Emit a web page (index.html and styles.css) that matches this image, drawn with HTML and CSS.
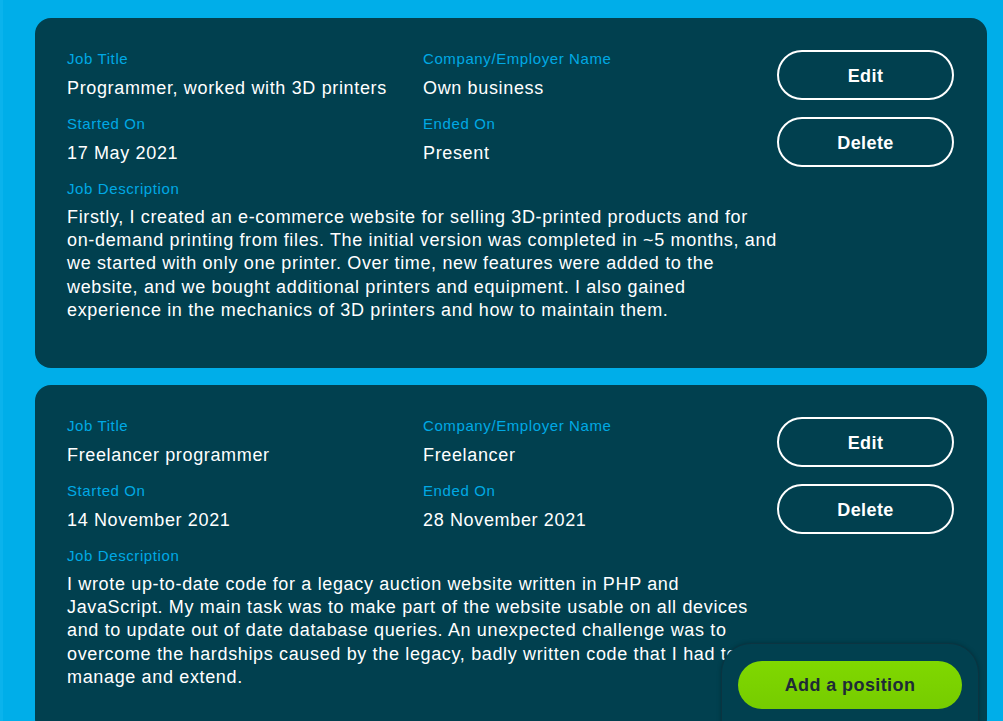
FILE: index.html
```html
<!DOCTYPE html>
<html lang="en">
<head>
<meta charset="utf-8">
<title>Positions</title>
<link rel="stylesheet" href="styles.css">
</head>
<body>
<main class="list">
  <article class="card">
    <div class="info">
      <div class="field">
        <div class="label">Job Title</div>
        <div class="value">Programmer, worked with 3D printers</div>
      </div>
      <div class="field">
        <div class="label">Company/Employer Name</div>
        <div class="value">Own business</div>
      </div>
      <div class="field">
        <div class="label">Started On</div>
        <div class="value">17 May 2021</div>
      </div>
      <div class="field">
        <div class="label">Ended On</div>
        <div class="value">Present</div>
      </div>
      <div class="field wide">
        <div class="label">Job Description</div>
        <p class="desc">Firstly, I created an e-commerce website for selling 3D-printed products and for on-demand printing from files. The initial version was completed in ~5 months, and we started with only one printer. Over time, new features were added to the website, and we bought additional printers and equipment. I also gained experience in the mechanics of 3D printers and how to maintain them.</p>
      </div>
    </div>
    <div class="actions">
      <button class="btn-outline">Edit</button>
      <button class="btn-outline">Delete</button>
    </div>
  </article>

  <article class="card">
    <div class="info">
      <div class="field">
        <div class="label">Job Title</div>
        <div class="value">Freelancer programmer</div>
      </div>
      <div class="field">
        <div class="label">Company/Employer Name</div>
        <div class="value">Freelancer</div>
      </div>
      <div class="field">
        <div class="label">Started On</div>
        <div class="value">14 November 2021</div>
      </div>
      <div class="field">
        <div class="label">Ended On</div>
        <div class="value">28 November 2021</div>
      </div>
      <div class="field wide">
        <div class="label">Job Description</div>
        <p class="desc">I wrote up-to-date code for a legacy auction website written in PHP and JavaScript. My main task was to make part of the website usable on all devices and to update out of date database queries. An unexpected challenge was to overcome the hardships caused by the legacy, badly written code that I had to manage and extend.</p>
      </div>
    </div>
    <div class="actions">
      <button class="btn-outline">Edit</button>
      <button class="btn-outline">Delete</button>
    </div>
  </article>
</main>

<div class="add-panel">
  <button class="btn-add">Add a position</button>
</div>
</body>
</html>
```

FILE: styles.css
```css
html, body {
  margin: 0;
  padding: 0;
}

body {
  background: #00aee9;
  font-family: "Liberation Sans", Arial, Helvetica, sans-serif;
  color: #ffffff;
  border-left: 3px solid #0bb3ec;
}

.list {
  display: flex;
  flex-direction: column;
  gap: 17px;
  padding: 18px 16px 40px 32px;
}

.card {
  display: flex;
  background: #01404f;
  border-radius: 16px;
  padding: 32px 33px 46px 32px;
}

.info {
  flex: 1;
  min-width: 0;
  display: grid;
  grid-template-columns: 356px 1fr;
  row-gap: 16px;
}

.field.wide {
  grid-column: 1 / -1;
  margin-right: -2px;
}

.label {
  font-size: 15px;
  line-height: 18px;
  letter-spacing: 0.6px;
  color: #00a9e4;
  margin-bottom: 9px;
}

.value {
  font-size: 18px;
  line-height: 22px;
  letter-spacing: 0.65px;
}

.desc {
  margin: -1px 0 0;
  font-size: 18px;
  line-height: 23.2px;
  letter-spacing: 0.65px;
}

.actions {
  width: 177px;
  display: flex;
  flex-direction: column;
  gap: 17px;
}

.btn-outline {
  height: 50px;
  width: 177px;
  border: 2px solid #ffffff;
  border-radius: 25px;
  background: transparent;
  color: #ffffff;
  font-family: "Liberation Sans", Arial, sans-serif;
  font-weight: 700;
  font-size: 18px;
  letter-spacing: 0.4px;
  padding: 2px 0 0;
}

.add-panel {
  position: fixed;
  right: 24px;
  bottom: -36px;
  width: 224px;
  padding: 17px 16px 47px;
  background: #01404f;
  border: 1px solid #0b3441;
  border-radius: 30px;
  box-shadow: 0 0 4px rgba(0, 0, 0, 0.25);
}

.btn-add {
  display: block;
  width: 224px;
  height: 48px;
  border: none;
  border-radius: 24px;
  background: linear-gradient(#80d800, #76cc00);
  color: #1e2b36;
  font-family: "Liberation Sans", Arial, sans-serif;
  font-weight: 700;
  font-size: 18px;
  letter-spacing: 0.4px;
  padding: 0;
}
```
